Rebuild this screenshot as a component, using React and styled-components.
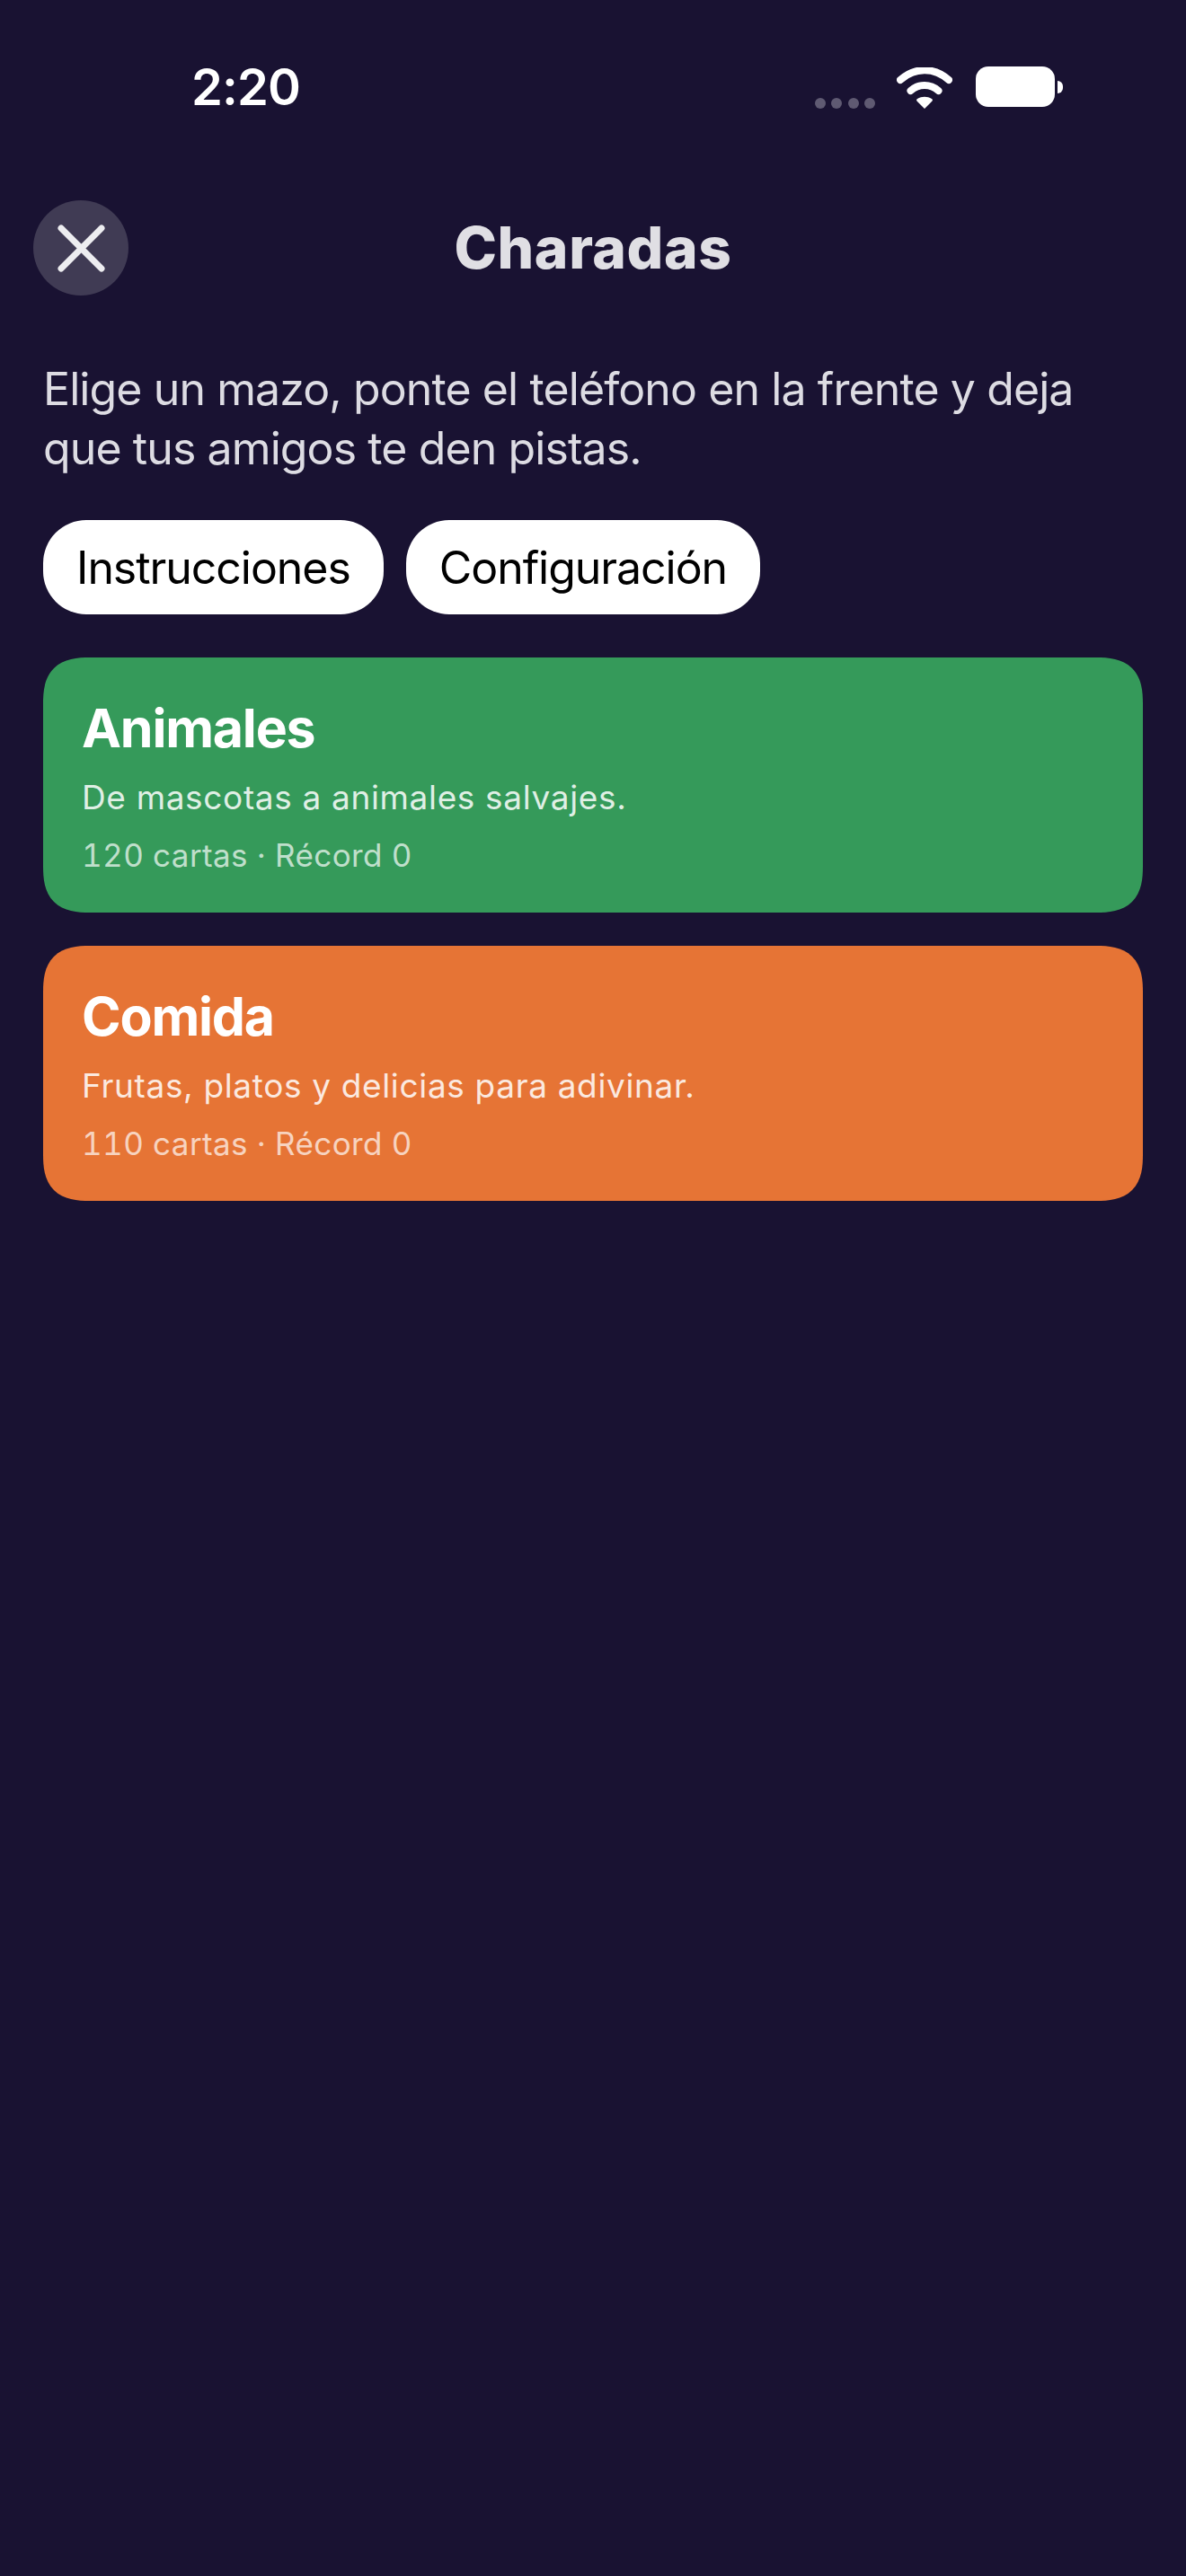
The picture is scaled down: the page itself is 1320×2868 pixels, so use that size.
import styled, { createGlobalStyle } from "styled-components"

const GlobalStyle = createGlobalStyle`
  html, body {
    margin: 0;
    padding: 0;
    background: #191232;
  }
  * {
    box-sizing: border-box;
  }
`

const Screen = styled.div`
  width: 1320px;
  height: 2868px;
  background: #191232;
  font-family: Inter, "Liberation Sans", sans-serif;
  overflow: hidden;
`

const StatusBar = styled.div`
  display: flex;
  align-items: flex-start;
  height: 223px;
  padding: 63px 137px 0 213px;
`

const Time = styled.div`
  font-size: 56px;
  line-height: 68px;
  font-weight: 600;
  letter-spacing: -0.9px;
  color: #fff;
  flex: 1;
`

const Dots = styled.div`
  display: flex;
  gap: 6.5px;
  margin: 46px 24px 0 0;
`

const Dot = styled.span`
  width: 12px;
  height: 12px;
  border-radius: 50%;
  background: #5f5a72;
`

const Wifi = styled.svg`
  width: 62px;
  height: 46px;
  margin: 12px 26px 0 0;
`

const Battery = styled.div`
  display: flex;
  align-items: center;
  gap: 3px;
  margin-top: 11px;
`

const BatteryBody = styled.div`
  width: 88px;
  height: 45px;
  border-radius: 14px;
  background: #fff;
`

const BatteryCap = styled.div`
  width: 6px;
  height: 14px;
  border-radius: 0 7px 7px 0;
  background: #fff;
`

const Header = styled.div`
  display: grid;
  grid-template-columns: 106px 1fr 106px;
  align-items: center;
  padding: 0 37px;
`

const CloseButton = styled.button`
  width: 106px;
  height: 106px;
  border: 0;
  padding: 0;
  border-radius: 50%;
  background: #403b54;
  display: flex;
  align-items: center;
  justify-content: center;
`

const Title = styled.h1`
  margin: 0;
  text-align: center;
  font-size: 64px;
  line-height: 74px;
  font-weight: 800;
  letter-spacing: 0.6px;
  color: #e0dfe4;
`

const Content = styled.div`
  padding: 0 48px;
`

const Intro = styled.p`
  margin: 71px 0 0;
  font-size: 50px;
  line-height: 66px;
  font-weight: 400;
  letter-spacing: -0.9px;
  color: #dddce3;
`

const Actions = styled.div`
  display: flex;
  gap: 25px;
  margin-top: 47px;
`

const ActionButton = styled.button`
  height: 105px;
  padding: 0 37px;
  border: 0;
  border-radius: 48px;
  background: #fff;
  color: #000;
  font-family: inherit;
  font-size: 50px;
  font-weight: 400;
  letter-spacing: -1.05px;
`

const Decks = styled.div`
  display: flex;
  flex-direction: column;
  gap: 37px;
  margin-top: 48px;
`

const Deck = styled.div`
  height: 284px;
  padding: 43px 43px 0;
  border-radius: 52px;
  corner-shape: superellipse(1.4);
  background: ${(props) => props.$color};
`

const DeckName = styled.div`
  font-size: 59px;
  line-height: 72px;
  font-weight: 700;
  letter-spacing: -1.2px;
  color: #fff;
`

const DeckText = styled.div`
  margin-top: 18px;
  font-size: 37px;
  line-height: 46px;
  letter-spacing: 0.65px;
  color: rgba(255, 255, 255, 0.85);
`

const DeckMeta = styled.div`
  margin-top: 19px;
  font-size: 35px;
  line-height: 44px;
  font-variant-numeric: tabular-nums;
  letter-spacing: 0.4px;
  color: rgba(255, 255, 255, 0.7);
`

const decks = [
  { name: "Animales", text: "De mascotas a animales salvajes.", meta: "120 cartas · Récord 0", color: "#359a5a" },
  { name: "Comida", text: "Frutas, platos y delicias para adivinar.", meta: "110 cartas · Récord 0", color: "#e67435" },
]

const App = () => {
  return (
    <Screen>
      <GlobalStyle />
      <StatusBar>
        <Time>2:20</Time>
        <Dots>
          <Dot />
          <Dot />
          <Dot />
          <Dot />
        </Dots>
        <Wifi viewBox="0 0 62 46">
          <path d="M4 14C20 -0.5 42 -0.5 58 14" fill="none" stroke="#fff" strokeWidth="8" strokeLinecap="round" />
          <path d="M15.5 26C24.5 18 37.5 18 46.5 26" fill="none" stroke="#fff" strokeWidth="8" strokeLinecap="round" />
          <path d="M31 46L22.5 37.5C21.8 36.6 22 35.6 23 35C28 32 34 32 39 35C40 35.6 40.2 36.6 39.5 37.5Z" fill="#fff" />
        </Wifi>
        <Battery>
          <BatteryBody />
          <BatteryCap />
        </Battery>
      </StatusBar>
      <Header>
        <CloseButton>
          <svg width="53" height="53" viewBox="0 0 53 53">
            <path d="M4 4L49 49M49 4L4 49" stroke="#ededf0" strokeWidth="7" strokeLinecap="round" />
          </svg>
        </CloseButton>
        <Title>Charadas</Title>
      </Header>
      <Content>
        <Intro>
          Elige un mazo, ponte el teléfono en la frente y deja
          <br />
          que tus amigos te den pistas.
        </Intro>
        <Actions>
          <ActionButton>Instrucciones</ActionButton>
          <ActionButton>Configuración</ActionButton>
        </Actions>
        <Decks>
          {decks.map((deck) => (
            <Deck key={deck.name} $color={deck.color}>
              <DeckName>{deck.name}</DeckName>
              <DeckText>{deck.text}</DeckText>
              <DeckMeta>{deck.meta}</DeckMeta>
            </Deck>
          ))}
        </Decks>
      </Content>
    </Screen>
  )
}

export default App
